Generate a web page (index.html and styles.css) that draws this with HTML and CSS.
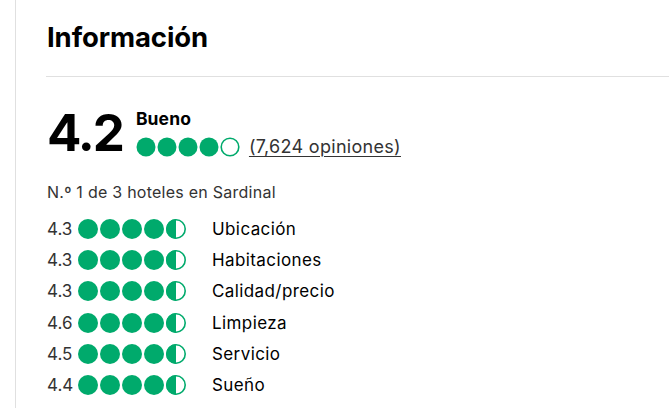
FILE: index.html
```html
<!DOCTYPE html>
<html lang="es">
<head>
<meta charset="utf-8">
<link rel="stylesheet" href="styles.css">
<title>Información</title>
</head>
<body>
<div class="frame">
  <section class="info">
    <h2 class="title">Información</h2>
    <hr class="divider">
    <div class="overall">
      <div class="score">4.2</div>
      <div class="overall-meta">
        <div class="word">Bueno</div>
        <div class="bubble-line">
          <svg class="bubbles big" viewBox="0 0 104 20" aria-hidden="true">
            <circle cx="10" cy="10" r="9.5" class="f"/>
            <circle cx="31" cy="10" r="9.5" class="f"/>
            <circle cx="52" cy="10" r="9.5" class="f"/>
            <circle cx="73" cy="10" r="9.5" class="f"/>
            <circle cx="94" cy="10" r="8.8" class="o"/>
          </svg>
          <a class="reviews" href="#">(7,624 opiniones)</a>
        </div>
      </div>
    </div>
    <p class="rank">N.º 1 de 3 hoteles en Sardinal</p>
    <ul class="rows">
      <li class="row"><span class="num">4.3</span><svg class="bubbles" viewBox="0 0 108 20"><circle cx="10" cy="10" r="10" class="f"/><circle cx="32" cy="10" r="10" class="f"/><circle cx="54" cy="10" r="10" class="f"/><circle cx="76" cy="10" r="10" class="f"/><circle cx="98" cy="10" r="9.2" class="o"/><path d="M98 0a10 10 0 0 0 0 20z" class="f"/></svg><span class="label">Ubicación</span></li>
      <li class="row"><span class="num">4.3</span><svg class="bubbles" viewBox="0 0 108 20"><circle cx="10" cy="10" r="10" class="f"/><circle cx="32" cy="10" r="10" class="f"/><circle cx="54" cy="10" r="10" class="f"/><circle cx="76" cy="10" r="10" class="f"/><circle cx="98" cy="10" r="9.2" class="o"/><path d="M98 0a10 10 0 0 0 0 20z" class="f"/></svg><span class="label">Habitaciones</span></li>
      <li class="row"><span class="num">4.3</span><svg class="bubbles" viewBox="0 0 108 20"><circle cx="10" cy="10" r="10" class="f"/><circle cx="32" cy="10" r="10" class="f"/><circle cx="54" cy="10" r="10" class="f"/><circle cx="76" cy="10" r="10" class="f"/><circle cx="98" cy="10" r="9.2" class="o"/><path d="M98 0a10 10 0 0 0 0 20z" class="f"/></svg><span class="label">Calidad/precio</span></li>
      <li class="row"><span class="num">4.6</span><svg class="bubbles" viewBox="0 0 108 20"><circle cx="10" cy="10" r="10" class="f"/><circle cx="32" cy="10" r="10" class="f"/><circle cx="54" cy="10" r="10" class="f"/><circle cx="76" cy="10" r="10" class="f"/><circle cx="98" cy="10" r="9.2" class="o"/><path d="M98 0a10 10 0 0 0 0 20z" class="f"/></svg><span class="label">Limpieza</span></li>
      <li class="row"><span class="num">4.5</span><svg class="bubbles" viewBox="0 0 108 20"><circle cx="10" cy="10" r="10" class="f"/><circle cx="32" cy="10" r="10" class="f"/><circle cx="54" cy="10" r="10" class="f"/><circle cx="76" cy="10" r="10" class="f"/><circle cx="98" cy="10" r="9.2" class="o"/><path d="M98 0a10 10 0 0 0 0 20z" class="f"/></svg><span class="label">Servicio</span></li>
      <li class="row"><span class="num">4.4</span><svg class="bubbles" viewBox="0 0 108 20"><circle cx="10" cy="10" r="10" class="f"/><circle cx="32" cy="10" r="10" class="f"/><circle cx="54" cy="10" r="10" class="f"/><circle cx="76" cy="10" r="10" class="f"/><circle cx="98" cy="10" r="9.2" class="o"/><path d="M98 0a10 10 0 0 0 0 20z" class="f"/></svg><span class="label">Sueño</span></li>
    </ul>
  </section>
</div>
</body>
</html>
```
FILE: styles.css
```css
html, body {
  margin: 0;
  padding: 0;
  background: #fff;
}
body {
  font-family: Inter, "Noto Sans", sans-serif;
  color: #000;
  height: 408px;
  overflow: hidden;
}
.frame {
  margin-left: 15px;
  border-left: 1px solid #e0e0e0;
  height: 408px;
}
.info {
  padding-left: 31px;
}
.title {
  margin: 0;
  padding-top: 20px;
  font-size: 27.5px;
  line-height: 34px;
  font-weight: 700;
  letter-spacing: -0.1px;
}
.divider {
  margin: 22px 0 0 -1px;
  border: 0;
  border-top: 1px solid #e0e0e0;
  height: 0;
}
.overall {
  display: flex;
  align-items: flex-start;
  margin-top: 26px;
}
.score {
  font-size: 51px;
  font-weight: 700;
  line-height: 60px;
  letter-spacing: -2px;
}
.overall-meta {
  margin-left: 13px;
  padding-top: 6px;
}
.word {
  font-size: 17.5px;
  font-weight: 700;
  line-height: 20px;
  letter-spacing: 0.1px;
}
.bubble-line {
  display: flex;
  align-items: center;
  margin-top: 7px;
}
.bubbles {
  display: block;
  fill: #00aa6c;
}
.bubbles .f { fill: #00aa6c; }
.bubbles .o { fill: #fff; stroke: #00aa6c; stroke-width: 1.6; }
.bubbles.big {
  width: 104px;
  height: 20px;
}
.reviews {
  margin-left: 9px;
  font-size: 18px;
  letter-spacing: 0.3px;
  color: #333;
  text-decoration: underline;
  text-decoration-thickness: 1px;
  text-underline-offset: 3px;
}
.rank {
  margin: 19px 0 0 0;
  font-size: 16px;
  line-height: 20px;
  letter-spacing: 0.25px;
  color: #333;
}
.rows {
  list-style: none;
  margin: 11px 0 0 0;
  padding: 0;
}
.row {
  display: flex;
  align-items: center;
  height: 31.3px;
}
.num {
  width: 31px;
  font-size: 17px;
  color: #333;
}
.bubbles:not(.big) {
  width: 108px;
  height: 20px;
}
.label {
  margin-left: 26px;
  font-size: 17px;
  letter-spacing: 0.4px;
  color: #000;
}
```
